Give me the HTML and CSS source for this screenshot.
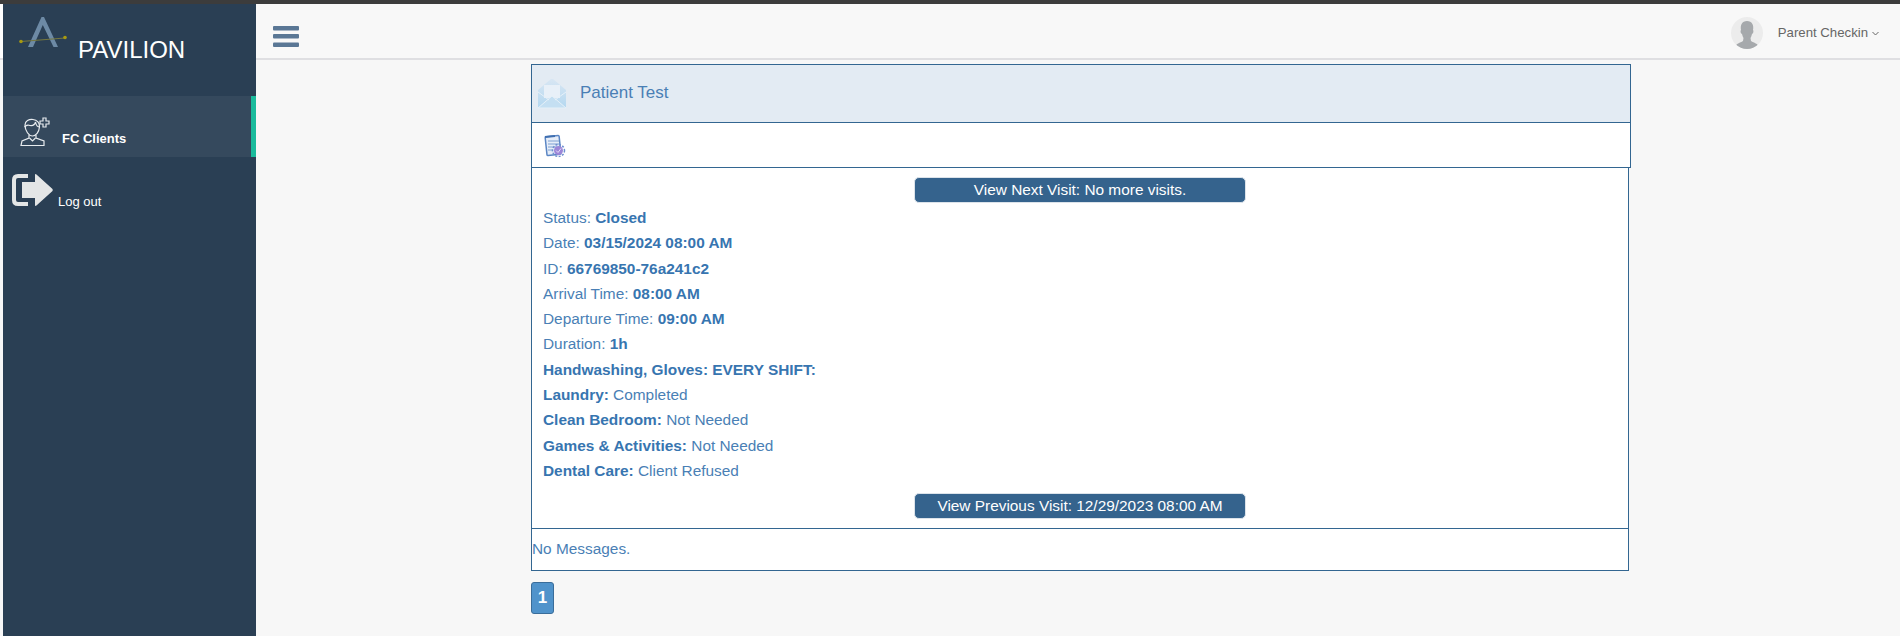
FILE: index.html
```html
<!DOCTYPE html>
<html lang="en">
<head>
<meta charset="utf-8">
<title>Pavilion</title>
<link rel="stylesheet" href="styles.css">
</head>
<body>
<div class="topline"></div>
<div class="frame">
  <div class="strip"><div class="strip-top"></div></div>
  <aside class="sidebar">
    <div class="brand">
      <svg class="logo" width="50" height="36" viewBox="0 0 50 36">
        <path d="M10 30 L23.500 0 L26 0 L40 30 L35.500 30 L24.800 8 L15 30 Z" fill="#6d8aa5"/>
        <path d="M3 24.500 L47 21" stroke="#77783f" stroke-width="1.200"/>
        <circle cx="3" cy="24.500" r="1.800" fill="#a89a10"/>
        <circle cx="47" cy="20.500" r="1.800" fill="#a89a10"/>
      </svg>
      <span class="brand-name">PAVILION</span>
    </div>
    <nav>
      <a class="nav-item nav-active">
        <svg class="nav-user" width="32" height="30" viewBox="0 0 32 30" fill="none" stroke="#e8ecef" stroke-width="1.200">
          <path d="M5 9 C5 5 9 3 13 3.500 C17 4 20 7 19.500 11 C19 16 16 20 12.500 20 C9 20 5 15 5 9 Z"/>
          <path d="M4.500 11 C7 8 8 9 10 9.500 C13 10 15 8 15.500 6 C16 9 18 11 20 11"/>
          <path d="M9 19 L9 22 L2 25 L1 29.500 L24 29.500 L24 25 L16 22 L16 19"/>
          <path d="M9.500 22 L12.500 25 L15.500 22"/>
          <path d="M23 2 H26 V5 H29 V8 H26 V11 H23 V8 H20 V5 H23 Z" fill="#35495d"/>
        </svg>
        <span>FC Clients</span>
      </a>
      <a class="nav-item nav-logout">
        <svg class="nav-exit" width="42" height="34" viewBox="0 0 42 34">
          <path d="M17 3 H7 Q3 3 3 7 V27 Q3 31 7 31 H17" fill="none" stroke="#e4e6e6" stroke-width="4"/>
          <path d="M11 9 H24 V2 Q24 0 26 2 L41.500 16 Q42 17 41.500 18 L26 32 Q24 34 24 32 V25 H11 Z" fill="#e4e6e6"/>
        </svg>
        <span>Log out</span>
      </a>
    </nav>
  </aside>
  <div class="content">
    <header class="topnav">
      <svg class="burger" width="26" height="21" viewBox="0 0 26 21" fill="#5a7795">
        <rect width="26" height="4.500" rx="1"/>
        <rect y="8" width="26" height="4.500" rx="1"/>
        <rect y="16.500" width="26" height="4.500" rx="1"/>
      </svg>
      <div class="account">
        <svg class="avatar" width="32" height="32" viewBox="0 0 32 32">
          <defs><clipPath id="avatar-clip"><circle cx="16" cy="16" r="16"/></clipPath></defs>
          <circle cx="16" cy="16" r="16" fill="#ececec"/>
          <g clip-path="url(#avatar-clip)" fill="#a6a9ac">
            <path d="M16 4 C21 4 23 8 22 13 C23 14 22 17 21 17 C20.500 19 20 20 19.500 21 L20 24 C23 26 27 26 28 31 L28 32 H4 L4 31 C5 26 9 26 12 24 L12.500 21 C12 20 11.500 19 11 17 C10 17 9 14 10 13 C9 8 11 4 16 4 Z"/>
          </g>
        </svg>
        <span class="account-name">Parent Checkin</span>
        <svg class="chev" width="7" height="5" viewBox="0 0 7 5" fill="none" stroke="#666" stroke-width="1"><path d="M0.500 1 L3.500 4 L6.500 1"/></svg>
      </div>
    </header>
    <main class="page">
      <div class="panel-head">
        <svg class="envelope" width="28" height="30" viewBox="0 0 28 30">
          <defs>
            <linearGradient id="env" x1="0" y1="0" x2="0" y2="1">
              <stop offset="0" stop-color="#d8e6f3"/>
              <stop offset="1" stop-color="#b4d8f0"/>
            </linearGradient>
          </defs>
          <path d="M0 11 L13 0 L15 0 L28 11 V29 H0 Z" fill="url(#env)"/>
          <rect x="6" y="6" width="16" height="13" fill="#e8f0f8"/>
          <path d="M0 29 L14 17 L28 29 Z" fill="#c4dff2" stroke="#e6f0f8"/>
          <path d="M0 13 L11 21 M28 13 L17 21" fill="none" stroke="#e6f0f8"/>
        </svg>
        <span class="panel-title">Patient Test</span>
      </div>
      <div class="panel-tools">
        <svg width="22" height="24" viewBox="0 0 22 24">
          <rect x="2" y="2" width="14" height="19" rx="1" fill="#e6edf8" stroke="#5b86c4" stroke-width="1.500" transform="rotate(-6 9 11)"/>
          <path d="M1 3 L11 2" stroke="#3f6fb0" stroke-width="2"/>
          <path d="M4 7 H15 M4 10 H15 M4 13 H13 M4 16 H9" stroke="#7ea1d2" stroke-width="1.200"/>
          <circle cx="14.500" cy="16.500" r="6" fill="none" stroke="#6f8fd0" stroke-width="1.500" stroke-dasharray="2 1.500"/>
          <circle cx="14.500" cy="16.500" r="4.500" fill="#9c86d8"/>
          <path d="M12 16.500 L14 18.500 L17 14.500" stroke="#e4dcf6" fill="none"/>
        </svg>
      </div>
      <section class="visit">
        <button class="visit-btn" type="button">View Next Visit: No more visits.</button>
        <ul class="facts">
          <li>Status: <b>Closed</b></li>
          <li>Date: <b>03/15/2024 08:00 AM</b></li>
          <li>ID: <b>66769850-76a241c2</b></li>
          <li>Arrival Time: <b>08:00 AM</b></li>
          <li>Departure Time: <b>09:00 AM</b></li>
          <li>Duration: <b>1h</b></li>
          <li><b>Handwashing, Gloves: EVERY SHIFT:</b></li>
          <li><b>Laundry:</b> Completed</li>
          <li><b>Clean Bedroom:</b> Not Needed</li>
          <li><b>Games &amp; Activities:</b> Not Needed</li>
          <li><b>Dental Care:</b> Client Refused</li>
        </ul>
        <button class="visit-btn" type="button">View Previous Visit: 12/29/2023 08:00 AM</button>
      </section>
      <div class="messages">No Messages.</div>
      <a class="pager">1</a>
    </main>
  </div>
</div>
</body>
</html>
```
FILE: styles.css
```css
* { box-sizing: border-box; }
html, body { margin: 0; height: 100%; }
body {
  height: 636px;
  overflow: hidden;
  background: #f7f7f7;
  font-family: "Liberation Sans", Arial, sans-serif;
  font-size: 15.400px;
  color: #4a7fb5;
  display: flex;
  flex-direction: column;
}
.topline { height: 4px; background: #3c3c3c; flex: none; }
.frame { flex: 1; display: flex; min-height: 0; }
.strip { width: 3px; flex: none; }
.strip-top { height: 56px; background: #fff; border-bottom: 2px solid #dfdfe2; }
.sidebar { width: 253px; background: #2a3f54; flex: none; color: #ecf0f1; }
.brand { height: 92px; display: flex; padding: 13px 0 0 15px; }
.logo { display: block; }
.brand-name { font-size: 24px; color: #fff; line-height: 26px; margin: 20px 0 0 10px; }
.nav-item { display: flex; }
.nav-active {
  height: 61px;
  background: #35495d;
  border-right: 5px solid #1abb9c;
  padding: 20px 0 0 17px;
  font-weight: bold;
  font-size: 13px;
  color: #fff;
}
.nav-active span { margin: 15px 0 0 10px; line-height: 16px; }
.nav-logout { padding: 16px 0 0 8px; font-size: 13px; color: #fff; }
.nav-logout span { margin: 21px 0 0 5px; line-height: 16px; }
.content { flex: 1; min-width: 0; display: flex; flex-direction: column; }
.topnav {
  height: 56px;
  flex: none;
  background: #f8f8f8;
  border-bottom: 2px solid #dfdfe2;
  display: flex;
  justify-content: space-between;
  padding: 22px 21px 0 17px;
}
.account { display: flex; margin-top: -9px; color: #666; font-size: 13.200px; height: 32px; align-items: center; }
.account-name { margin: -2px 0 0 15px; }
.chev { margin-left: 4px; }
.page { padding: 4px 0 0 275px; }
.panel-head {
  width: 1100px;
  height: 59px;
  background: #e3ebf3;
  border: 1px solid #336691;
  display: flex;
  align-items: center;
  padding-left: 6px;
}
.panel-title { font-size: 17px; margin: -2px 0 0 14px; color: #4a7fb5; }
.panel-tools {
  width: 1100px;
  height: 46px;
  margin-top: -1px;
  background: #fff;
  border: 1px solid #336691;
  padding: 11px 0 0 12px;
}
.visit {
  width: 1098px;
  height: 362px;
  margin-top: -1px;
  background: #fff;
  border: 1px solid #336691;
  display: flex;
  flex-direction: column;
  padding-top: 9px;
}
.visit-btn {
  display: block;
  flex: none;
  width: 332px;
  height: 26px;
  margin: 0 0 0 382px;
  padding: 0;
  background: #35638d;
  border: 1px solid #dce3ea;
  border-radius: 5px;
  color: #fff;
  font: 15.400px "Liberation Sans", Arial, sans-serif;
}
.facts { list-style: none; margin: 2px 0 10px; padding: 0 0 0 11px; }
.facts li { height: 25.300px; line-height: 25.300px; white-space: nowrap; }
.facts b { color: #3775b0; }
.messages {
  width: 1098px;
  height: 43px;
  margin-top: -1px;
  background: #fff;
  border: 1px solid #336691;
  line-height: 40px;
  color: #4a7fb5;
}
.pager {
  display: block;
  width: 23px;
  height: 32px;
  margin-top: 11px;
  background: #5093cb;
  border: 1px solid #3a6d9a;
  border-radius: 3px;
  color: #fff;
  font-weight: bold;
  font-size: 17px;
  line-height: 30px;
  text-align: center;
}
```
